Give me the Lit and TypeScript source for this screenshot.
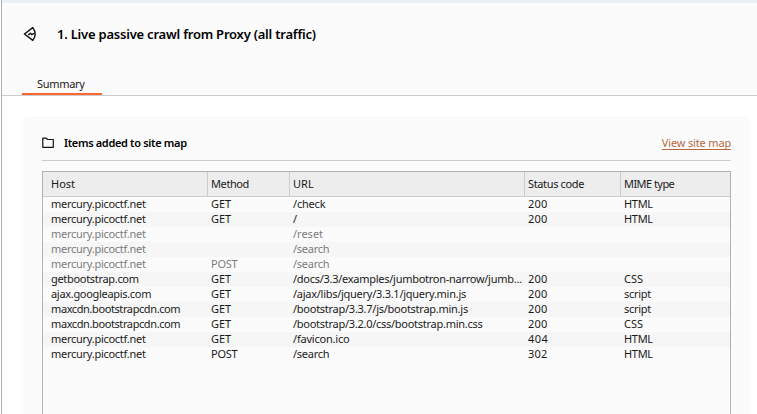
import { LitElement, html, css } from "lit";
import { customElement } from "lit/decorators.js";

type Row = { host: string; method: string; url: string; status: string; mime: string; dim?: boolean };

const M = "mercury.picoctf.net";
const ROWS: Row[] = [
  { host: M, method: "GET", url: "/check", status: "200", mime: "HTML" },
  { host: M, method: "GET", url: "/", status: "200", mime: "HTML" },
  { host: M, method: "", url: "/reset", status: "", mime: "", dim: true },
  { host: M, method: "", url: "/search", status: "", mime: "", dim: true },
  { host: M, method: "POST", url: "/search", status: "", mime: "", dim: true },
  { host: "getbootstrap.com", method: "GET", url: "/docs/3.3/examples/jumbotron-narrow/jumb...", status: "200", mime: "CSS" },
  { host: "ajax.googleapis.com", method: "GET", url: "/ajax/libs/jquery/3.3.1/jquery.min.js", status: "200", mime: "script" },
  { host: "maxcdn.bootstrapcdn.com", method: "GET", url: "/bootstrap/3.3.7/js/bootstrap.min.js", status: "200", mime: "script" },
  { host: "maxcdn.bootstrapcdn.com", method: "GET", url: "/bootstrap/3.2.0/css/bootstrap.min.css", status: "200", mime: "CSS" },
  { host: M, method: "GET", url: "/favicon.ico", status: "404", mime: "HTML" },
  { host: M, method: "POST", url: "/search", status: "302", mime: "HTML" },
];

// Letter spacing in px for each text; anything not listed keeps the font's own.
const TRACKING: Record<string, number> = {
  [M]: -0.27,
  "getbootstrap.com": -0.31,
  "ajax.googleapis.com": -0.31,
  "maxcdn.bootstrapcdn.com": -0.4,
  POST: -0.25,
  "/check": -0.2,
  "/search": -0.25,
  "/docs/3.3/examples/jumbotron-narrow/jumb...": -0.27,
  "/ajax/libs/jquery/3.3.1/jquery.min.js": -0.27,
  "/bootstrap/3.3.7/js/bootstrap.min.js": -0.26,
  "/bootstrap/3.2.0/css/bootstrap.min.css": -0.27,
  "/favicon.ico": -0.2,
  "200": 0.2,
  "302": 0.2,
  "404": 0.4,
  script: -0.3,
  HTML: -0.3,
  Method: -0.4,
  "Status code": -0.36,
  "MIME type": -0.55,
};

@customElement("site-table")
export class SiteTable extends LitElement {
  static styles = css`
    :host { display: flex; flex-direction: column; box-sizing: border-box; border: 1px solid #b2b2b2; border-bottom: 0; }
    .line { display: grid; grid-template-columns: 165px 82px 235px 96px 1fr; flex: none; }
    .head { height: 24px; background: #ededed; border-bottom: 1px solid #cccccc; line-height: 24px; }
    .head .cell { border-left: 1px solid #cccccc; }
    .head .cell:first-child { border-left-color: transparent; }
    .cell { border-left: 1px solid transparent; padding-left: 3px; white-space: nowrap; margin-left: -1px; min-width: 0; }
    .cell:first-child { padding-left: 8px; }
    .row { height: 15px; line-height: 14px; }
    .row:nth-child(odd) { background: #f6f6f6; }
    .dim { color: #7b7b7b; }
  `;
  private cell(text: string) {
    return html`<div class="cell" style="letter-spacing:${TRACKING[text] ?? 0}px">${text}</div>`;
  }
  render() {
    return html`
      <div class="line head">${["Host", "Method", "URL", "Status code", "MIME type"].map((t) => this.cell(t))}</div>
      ${ROWS.map(
        (r) => html`<div class="line row ${r.dim ? "dim" : ""}">
          ${[r.host, r.method, r.url, r.status, r.mime].map((t) => this.cell(t))}
        </div>`
      )}
    `;
  }
}

@customElement("app-root")
export class AppRoot extends LitElement {
  static styles = css`
    :host { display: flex; flex-direction: column; box-sizing: border-box; height: 414px; overflow: hidden;
      border-left: 1px solid #b2b2b2; margin-left: 1px; background: #fff; color: #1a1a1a;
      font: 11px "Noto Sans", sans-serif; }
    .strip { height: 3px; background: #e9f0f6; flex: none; }
    .top { height: 93px; box-sizing: border-box; flex: none; background: #fbfbfb; border-bottom: 1px solid #cccccc;
      display: flex; flex-direction: column; justify-content: space-between; }
    .title { display: flex; align-items: center; height: 62px; padding-left: 21px; gap: 17px; color: #000; }
    .title h1 { margin: 0; font-size: 13px; font-weight: 600; white-space: nowrap; letter-spacing: -0.22px; }
    .tab { width: 80px; height: 20px; margin-left: 20px; box-sizing: border-box; border-bottom: 2px solid #ff6633;
      line-height: 17px; padding-left: 15px; letter-spacing: -0.3px; }
    .panel { margin: 20px 6px 0 20px; border-radius: 8px 8px 0 0; background: #fbfbfb; padding: 0 20px; flex: 1;
      display: flex; flex-direction: column; }
    .bar { height: 45px; box-sizing: border-box; padding-top: 9px; border-bottom: 1px solid #cccccc; display: flex; align-items: center; color: #000; }
    .bar h2 { margin: 0 auto 0 9px; font-size: 11px; font-weight: 600; white-space: nowrap; letter-spacing: -0.34px; }
    .link { color: #b8693f; text-decoration: underline; text-underline-offset: 2px; text-decoration-thickness: 1px;
      text-decoration-skip-ink: none; letter-spacing: -0.16px; }
    site-table { margin-top: 10px; flex: 1; }
    svg { display: block; flex: none; fill: none; stroke: #111; }
  `;
  render() {
    return html`
      <div class="strip"></div>
      <div class="top">
        <div class="title">
          <svg width="17" height="17" viewBox="0 0 17 17" stroke-width="1.4" stroke-linejoin="round" stroke-linecap="round">
            <path d="M1.4 8 L9.8 1.6 Q14.6 8 9.8 14.4 Z M5.6 8.6 L7.6 7.2 L8.7 8.6 L10.6 7.6" />
          </svg>
          <h1>1. Live passive crawl from Proxy (all traffic)</h1>
        </div>
        <div class="tab">Summary</div>
      </div>
      <div class="panel">
        <div class="bar">
          <svg width="13" height="12" viewBox="0 0 13 12" stroke-width="1.2" stroke-linejoin="round">
            <path d="M.8 1.2 H4.3 L5.5 2.5 H11.3 V10.3 H.8 Z" />
          </svg>
          <h2>Items added to site map</h2>
          <span class="link">View site map</span>
        </div>
        <site-table></site-table>
      </div>
    `;
  }
}
